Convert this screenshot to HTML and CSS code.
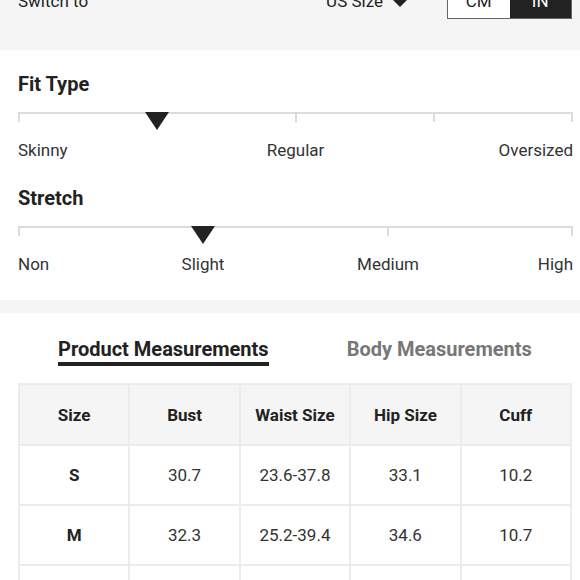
FILE: index.html
```html
<!DOCTYPE html>
<html>
<head>
<meta charset="utf-8">
<link rel="stylesheet" href="styles.css">
</head>
<body>
<div class="top">
  <div class="switch-row">
    <span class="switch-label">Switch to</span>
    <span class="size-select">US Size <span class="caret"></span></span>
    <div class="toggle">
      <span class="opt">CM</span>
      <span class="opt active">IN</span>
    </div>
  </div>
</div>

<div class="fit">
  <h2 class="fit-title first">Fit Type</h2>
  <div class="scale">
    <div class="ticks">
      <span class="seg"></span><span class="seg"></span><span class="seg"></span><span class="seg"></span>
    </div>
    <span class="marker" style="left:25%"></span>
  </div>
  <div class="labels three">
    <span class="l-start">Skinny</span>
    <span class="l-mid">Regular</span>
    <span class="l-end">Oversized</span>
  </div>

  <h2 class="fit-title">Stretch</h2>
  <div class="scale">
    <div class="ticks">
      <span class="seg"></span><span class="seg"></span><span class="seg"></span>
    </div>
    <span class="marker" style="left:33.333%"></span>
  </div>
  <div class="labels four">
    <span class="l-start">Non</span>
    <span class="l-a">Slight</span>
    <span class="l-b">Medium</span>
    <span class="l-end">High</span>
  </div>
</div>

<div class="band"></div>

<div class="tabs">
  <span class="tab active">Product Measurements</span>
  <span class="tab">Body Measurements</span>
</div>

<table class="sizes">
  <thead>
    <tr><th>Size</th><th>Bust</th><th>Waist Size</th><th>Hip Size</th><th>Cuff</th></tr>
  </thead>
  <tbody>
    <tr><th>S</th><td>30.7</td><td>23.6-37.8</td><td>33.1</td><td>10.2</td></tr>
    <tr><th>M</th><td>32.3</td><td>25.2-39.4</td><td>34.6</td><td>10.7</td></tr>
    <tr><th>L</th><td>34.6</td><td>27.6-41.7</td><td>37.0</td><td>11.2</td></tr>
  </tbody>
</table>
</body>
</html>
```

FILE: styles.css
```css
html, body {
  margin: 0;
  padding: 0;
  background: #fff;
  font-family: Roboto, "Liberation Sans", Arial, sans-serif;
  color: #222;
  width: 580px;
  overflow: hidden;
}

.top {
  background: #f5f5f5;
  height: 50px;
  overflow: hidden;
}

.switch-row {
  display: flex;
  align-items: center;
  height: 36px;
  margin-top: -17px;
  padding: 0 8px 0 18px;
  font-size: 17px;
  color: #222;
}

.switch-label {
  flex: 1;
}

.size-select {
  display: flex;
  align-items: center;
  gap: 10px;
  margin-right: 40px;
}

.caret {
  width: 0;
  height: 0;
  border-left: 7px solid transparent;
  border-right: 7px solid transparent;
  border-top: 7px solid #222;
  margin-top: 4px;
}

.toggle {
  display: flex;
  height: 36px;
  border: 1px solid #666;
  box-sizing: border-box;
  width: 125px;
}

.opt {
  flex: 1;
  display: flex;
  align-items: center;
  justify-content: center;
  background: #fff;
  color: #222;
}

.opt.active {
  background: #222;
  color: #fff;
}

.fit {
  padding: 0 7px 26px 18px;
}

.fit-title {
  margin: 26px 0 16px;
  font-size: 20px;
  line-height: 24px;
  font-weight: 700;
  color: #222;
}

.fit-title.first {
  margin-top: 22px;
}

.scale {
  position: relative;
  height: 18px;
}

.ticks {
  display: flex;
  height: 10px;
}

.seg {
  flex: 1;
  border-top: 2px solid #dcdcdc;
  border-left: 2px solid #dcdcdc;
}

.seg:last-child {
  border-right: 2px solid #dcdcdc;
}

.marker {
  position: absolute;
  top: 0;
  width: 0;
  height: 0;
  border-left: 12px solid transparent;
  border-right: 12px solid transparent;
  border-top: 18px solid #222;
  transform: translateX(-12px);
}

.labels {
  display: grid;
  margin-top: 10px;
  font-size: 17px;
  line-height: 20px;
  color: #333;
}

.labels.three {
  grid-template-columns: 1fr auto 1fr;
}

.labels.four {
  grid-template-columns: repeat(6, 1fr);
}

.l-start { justify-self: start; white-space: nowrap; }
.l-end { justify-self: end; white-space: nowrap; }
.l-mid { justify-self: center; }

.labels.four .l-start { grid-column: 1; }
.labels.four .l-a { grid-column: 2 / 4; justify-self: center; }
.labels.four .l-b { grid-column: 4 / 6; justify-self: center; }
.labels.four .l-end { grid-column: 6; }

.band {
  height: 13px;
  background: #f5f5f5;
}

.tabs {
  display: flex;
  gap: 78px;
  padding: 24px 0 0 58px;
  font-size: 20px;
  font-weight: 700;
  line-height: 24px;
}

.tab {
  color: #777;
  padding-bottom: 1px;
  border-bottom: 4px solid transparent;
}

.tab.active {
  color: #222;
  border-bottom-color: #222;
}

.sizes {
  margin: 17px 0 0 18px;
  width: 554px;
  border-collapse: collapse;
  table-layout: fixed;
  font-size: 17px;
  color: #333;
}

.sizes th,
.sizes td {
  border: 2px solid #ececec;
  height: 58px;
  text-align: center;
  padding: 0;
}

.sizes th {
  font-weight: 700;
  color: #222;
}

.sizes thead th {
  background: #f5f5f5;
  height: 59px;
}
```
